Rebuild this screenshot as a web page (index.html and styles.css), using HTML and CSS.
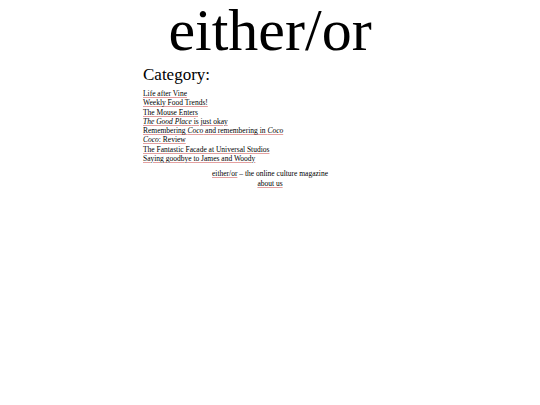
FILE: index.html
```html
<!DOCTYPE html>
<html>
<head>
<meta charset="utf-8">
<link rel="stylesheet" href="styles.css">
</head>
<body>
<header class="masthead">
  <h1 class="title">either/or</h1>
</header>
<main class="content">
  <h2 class="heading">Category:</h2>
  <ul class="posts">
    <li><a href="#">Life after Vine</a></li>
    <li><a href="#">Weekly Food Trends!</a></li>
    <li><a href="#">The Mouse Enters</a></li>
    <li><a href="#"><i>The Good Place</i> is just okay</a></li>
    <li><a href="#">Remembering <i>Coco</i> and remembering in <i>Coco</i></a></li>
    <li><a href="#"><i>Coco</i>: Review</a></li>
    <li><a href="#">The Fantastic Facade at Universal Studios</a></li>
    <li><a href="#">Saying goodbye to James and Woody</a></li>
  </ul>
</main>
<footer class="footer">
  <div><a href="#">either/or</a> – the online culture magazine</div>
  <div><a href="#">about us</a></div>
</footer>
</body>
</html>
```
FILE: styles.css
```css
body {
  margin: 0;
  font-family: "Liberation Serif", serif;
  color: #000;
  background: #fff;
}
.masthead {
  display: flex;
  justify-content: center;
}
.title {
  margin: 0;
  font-size: 60px;
  font-weight: normal;
  line-height: 60px;
  color: #000;
}
.content {
  width: 254px;
  margin: 0 auto;
}
.heading {
  margin: 6px 0 5px;
  font-size: 17px;
  font-weight: normal;
  line-height: 18px;
}
.posts {
  list-style: none;
  margin: 0;
  padding: 0;
  width: 142px;
  font-size: 7.5px;
  line-height: 9.3px;
}
a {
  color: #000;
  text-decoration: underline;
  text-decoration-color: #e3a0a0;
}
.footer {
  margin-top: 6px;
  text-align: center;
  font-size: 7.5px;
  line-height: 9.5px;
}
```
